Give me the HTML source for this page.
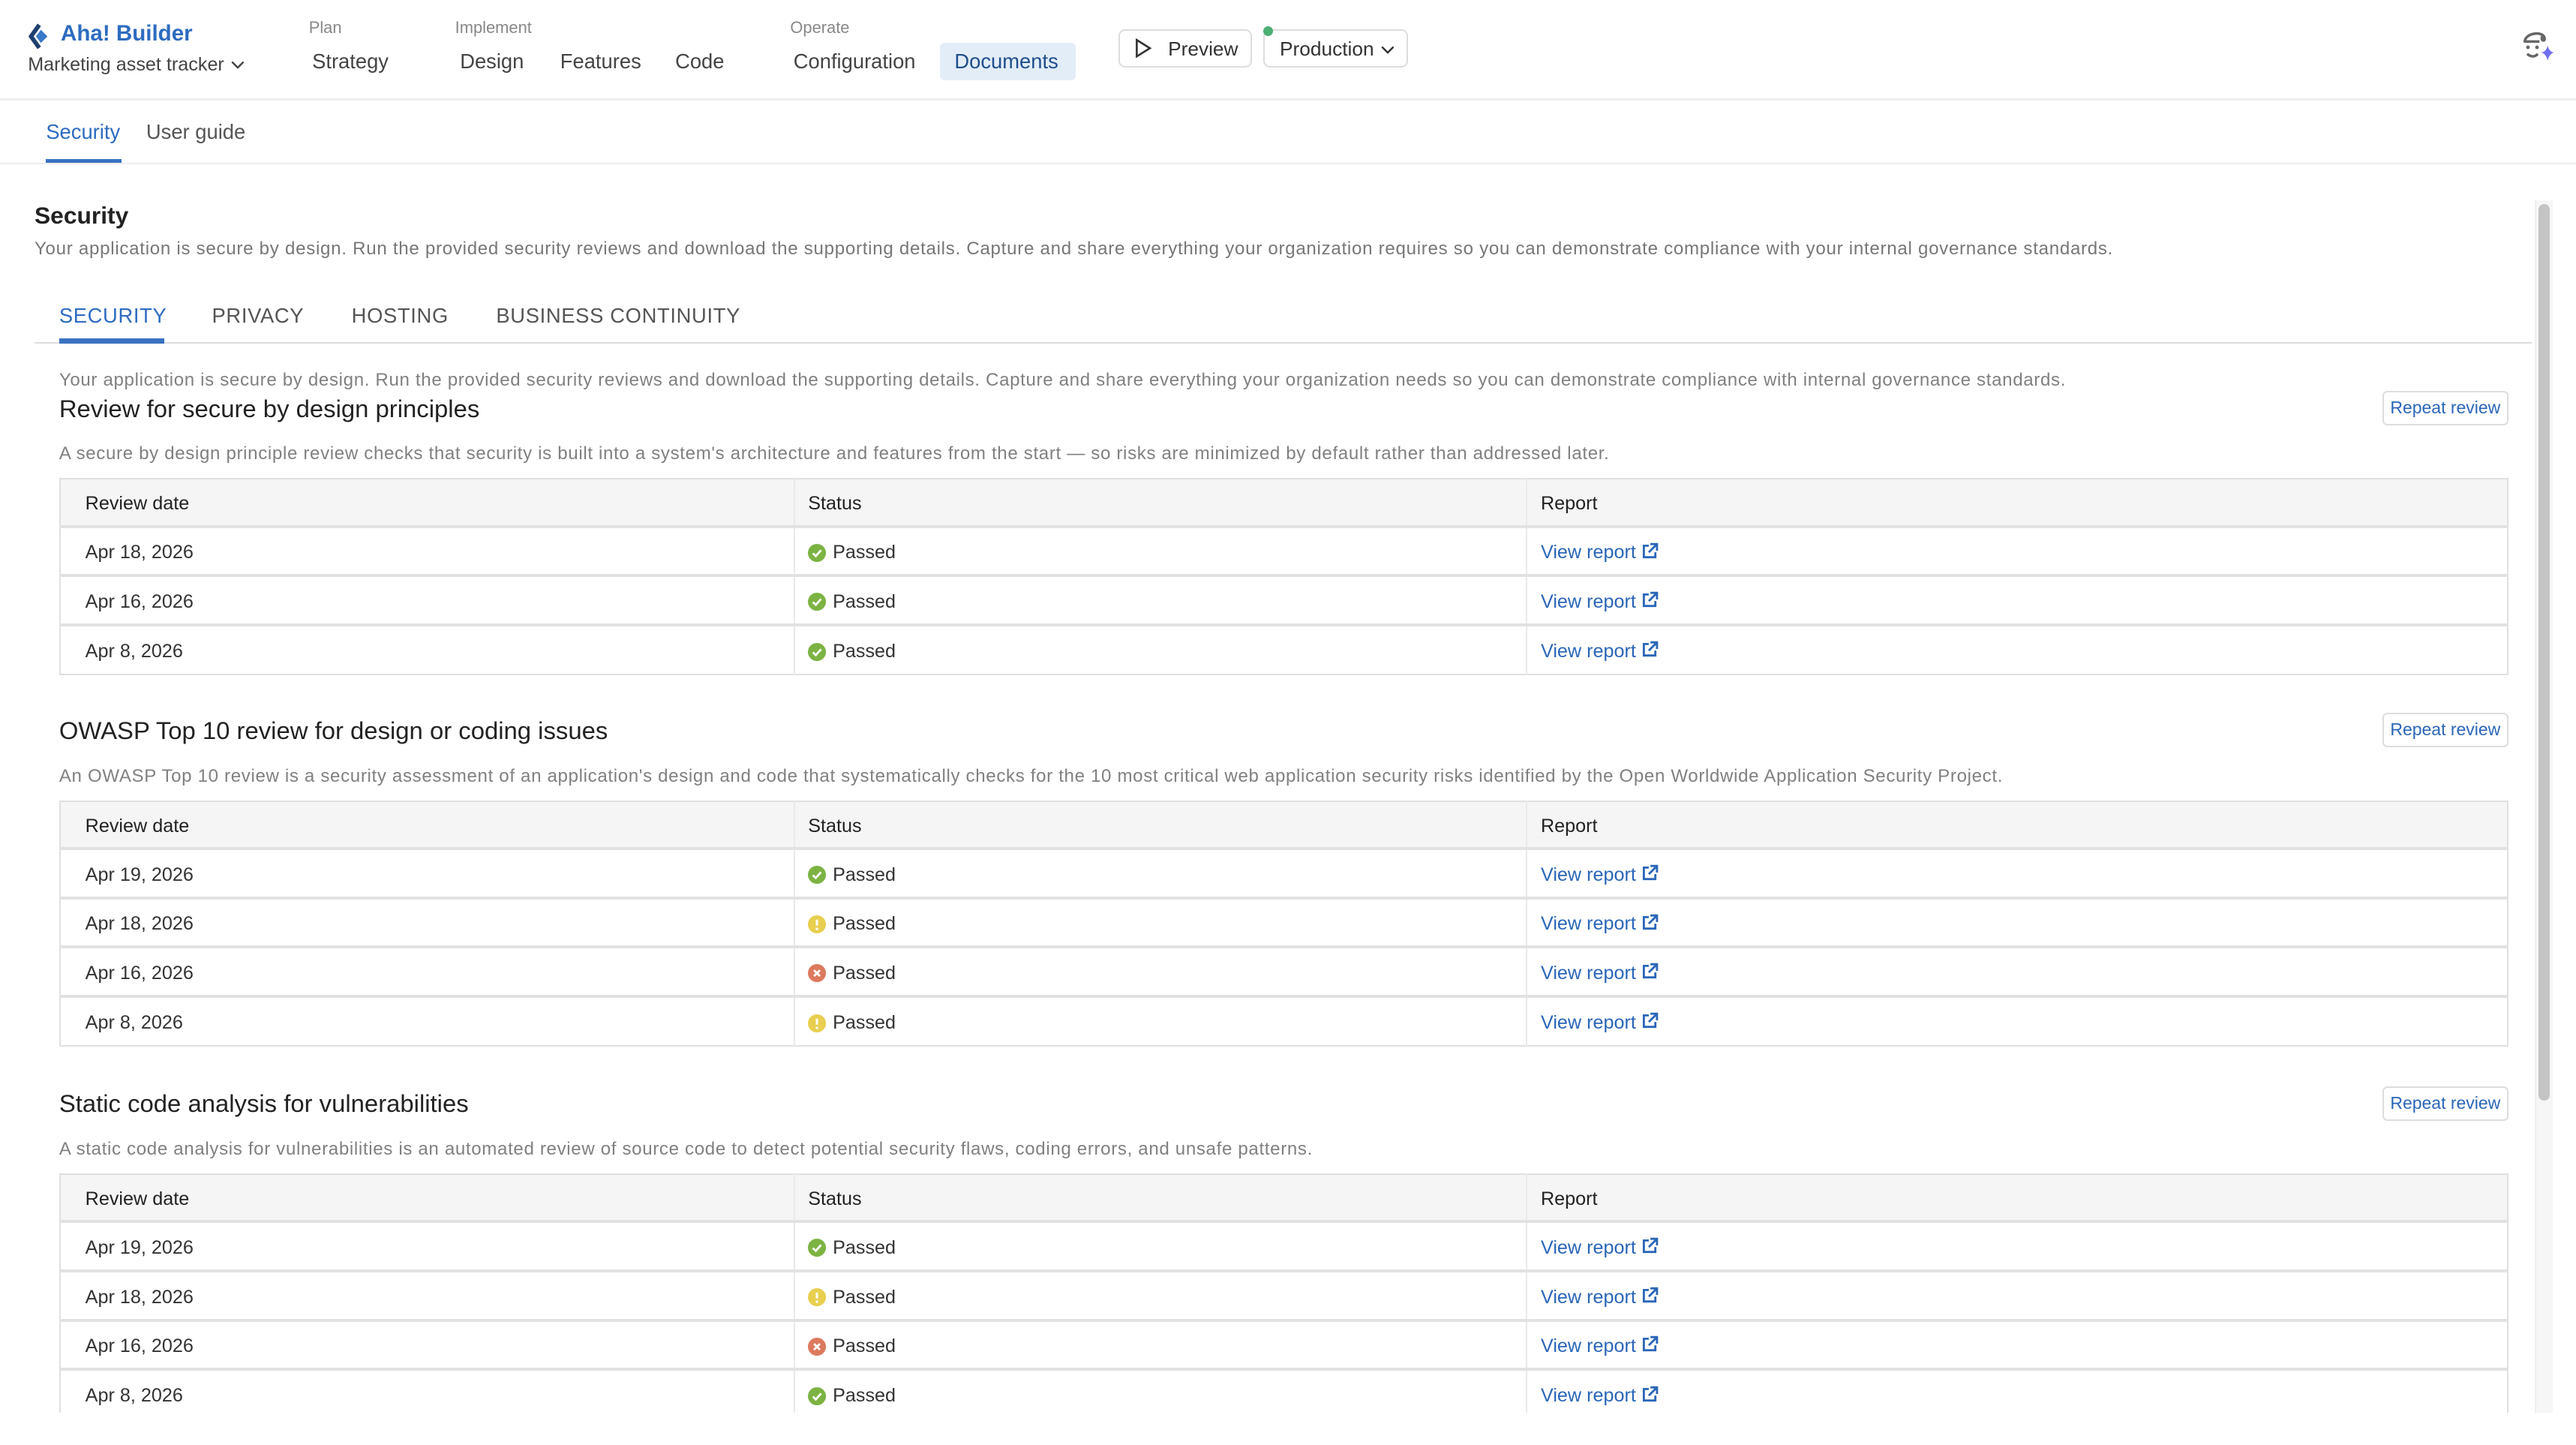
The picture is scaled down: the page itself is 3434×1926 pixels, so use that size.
<!DOCTYPE html>
<html><head><meta charset="utf-8"><style>
*{box-sizing:border-box;margin:0;padding:0}
html,body{width:3434px;height:1926px;overflow:hidden;background:#fff}
#r{zoom:2.19;width:1568px;height:880px;position:relative;font-family:"Liberation Sans",sans-serif;color:#333}
.a{position:absolute;white-space:nowrap}
.lbl{font-size:10px;color:#888;top:11px}
.nav{font-size:12.5px;color:#444;top:30px}
.btn{border:1px solid #ddd;border-radius:4px;background:#fff;font-size:12px;color:#333}
.h{font-size:15px;color:#222}
.d{font-size:11px;color:#808080;letter-spacing:.3px}
.rb{border:1px solid #ddd;border-radius:3px;font-size:10.5px;color:#2a66b8;width:77px;height:21px;text-align:center;line-height:19px}
table{position:absolute;left:36px;width:1491px;border-collapse:collapse;font-size:11.5px;color:#333;border:1px solid #e0e0e0}
td,th{height:30px;border-top:2px solid #e2e2e2;border-left:1px solid #eaeaea;padding:2px 0 0 8px;text-align:left;font-weight:normal;vertical-align:middle;line-height:14px}
th{background:#f5f5f5;color:#222;height:29px;border-top:none}
td:first-child,th:first-child{padding-left:15px;width:447px;border-left:none}
td:nth-child(2),th:nth-child(2){width:446px}
.ic{vertical-align:-2px;margin-right:4px}
.lk{color:#2a66b8}
.lk svg{vertical-align:-1px;margin-left:3px}
</style></head><body><div id="r">
<svg width="0" height="0" style="position:absolute"><defs>
<symbol id="g" viewBox="0 0 11 11"><circle cx="5.5" cy="5.5" r="5.5" fill="#7cb342"/><path d="M3 5.7 L4.8 7.4 L8 3.8" fill="none" stroke="#fff" stroke-width="1.3"/></symbol>
<symbol id="y" viewBox="0 0 11 11"><circle cx="5.5" cy="5.5" r="5.5" fill="#e8cf4f"/><path d="M5.5 2.6V6.3" stroke="#fff" stroke-width="1.4"/><circle cx="5.5" cy="8.2" r=".8" fill="#fff"/></symbol>
<symbol id="x" viewBox="0 0 11 11"><circle cx="5.5" cy="5.5" r="5.5" fill="#dd7a5e"/><path d="M3.7 3.7L7.3 7.3M7.3 3.7L3.7 7.3" stroke="#fff" stroke-width="1.3"/></symbol>
<symbol id="e" viewBox="0 0 11 11"><path d="M5 2H2v7h7V6M6 1h4v4M10 1L5 6" fill="none" stroke="#2a66b8" stroke-width="1.3"/></symbol>
</defs></svg>
<svg class="a" style="left:17px;top:14px" width="15" height="16" viewBox="0 0 15 16"><path d="M7 1 L2 8 L7 15" fill="none" stroke="#1f3f70" stroke-width="2.6"/><path d="M8 4 L12 8 L8 12 L5 8Z" fill="#3a78c9"/></svg>
<div class="a" style="left:37px;top:13px;font-size:13.5px;font-weight:bold;color:#2d6cc0">Aha! Builder</div>
<div class="a" style="left:17px;top:33px;font-size:11.5px;color:#444">Marketing asset tracker <svg width="10" height="8" viewBox="0 0 10 8"><path d="M1.5 2.5L5 6L8.5 2.5" fill="none" stroke="#444" stroke-width="1.1"/></svg></div>
<div class="a lbl" style="left:188px">Plan</div>
<div class="a lbl" style="left:277px">Implement</div>
<div class="a lbl" style="left:481px">Operate</div>
<div class="a nav" style="left:190px">Strategy</div>
<div class="a nav" style="left:280px">Design</div>
<div class="a nav" style="left:341px">Features</div>
<div class="a nav" style="left:411px">Code</div>
<div class="a nav" style="left:483px">Configuration</div>
<div class="a" style="left:572px;top:26px;width:83px;height:23px;background:#e3edf8;border-radius:3px"></div>
<div class="a nav" style="left:581px;color:#1f4e8c">Documents</div>
<div class="a btn" style="left:681px;top:18px;width:81px;height:23px"></div>
<svg class="a" style="left:690px;top:23px" width="12" height="13"><path d="M2 1.5 L10 6.5 L2 11.5Z" fill="none" stroke="#333" stroke-width="1.2"/></svg>
<div class="a" style="left:711px;top:23px;font-size:12px">Preview</div>
<div class="a btn" style="left:769px;top:18px;width:88px;height:23px"></div>
<div class="a" style="left:769px;top:16px;width:6px;height:6px;border-radius:50%;background:#4caf73"></div>
<div class="a" style="left:779px;top:23px;font-size:12px">Production <svg width="10" height="8" viewBox="0 0 10 8"><path d="M1.5 2.5L5 6L8.5 2.5" fill="none" stroke="#333" stroke-width="1.1"/></svg></div>
<svg class="a" style="left:1534px;top:18px" width="24" height="24" viewBox="0 0 24 24"><path d="M3 8 C3 2,14 1,15 5 C16 8,12 7,14 4" fill="none" stroke="#666" stroke-width="1.6"/><path d="M3 7.5 L12 7.5" stroke="#666" stroke-width="1.6"/><circle cx="5" cy="11" r="1.1" fill="#666"/><circle cx="10.5" cy="11" r="1.1" fill="#666"/><path d="M4.5 15 C7 17,9 17,11 15" fill="none" stroke="#666" stroke-width="1.6"/><path d="M17 10 Q18 14 21 14 Q18 15 17 19 Q16 15 13 14 Q16 14 17 10Z" fill="#6f6ff0"/></svg>
<div class="a" style="left:0;top:60px;width:1568px;height:1px;background:#eee"></div>
<div class="a" style="left:28px;top:73px;font-size:12.5px;color:#2d6cc0">Security</div>
<div class="a" style="left:89px;top:73px;font-size:12.5px;color:#555">User guide</div>
<div class="a" style="left:28px;top:97px;width:46px;height:2px;background:#3a72c2"></div>
<div class="a" style="left:0;top:99px;width:1568px;height:1px;background:#eee"></div>
<div class="a" style="left:1543px;top:122px;width:11px;height:738px;background:#f6f6f6;border-left:1px solid #eee"></div>
<div class="a" style="left:1545px;top:124px;width:7px;height:546px;background:#c4c4c4;border-radius:4px"></div>
<div class="a" style="left:21px;top:123px;font-size:14.5px;font-weight:bold;color:#222">Security</div>
<div class="a" style="left:21px;top:145px;font-size:11px;color:#777;letter-spacing:.33px">Your application is secure by design. Run the provided security reviews and download the supporting details. Capture and share everything your organization requires so you can demonstrate compliance with your internal governance standards.</div>
<div class="a" style="left:36px;top:185px;font-size:12.5px;color:#2d6cc0;letter-spacing:.3px">SECURITY</div>
<div class="a" style="left:129px;top:185px;font-size:12.5px;color:#555;letter-spacing:.3px">PRIVACY</div>
<div class="a" style="left:214px;top:185px;font-size:12.5px;color:#555;letter-spacing:.3px">HOSTING</div>
<div class="a" style="left:302px;top:185px;font-size:12.5px;color:#555;letter-spacing:.3px">BUSINESS CONTINUITY</div>
<div class="a" style="left:21px;top:208px;width:1520px;height:1px;background:#ddd"></div>
<div class="a" style="left:36px;top:206px;width:64px;height:3px;background:#3a72c2"></div>
<div class="a d" style="left:36px;top:225px">Your application is secure by design. Run the provided security reviews and download the supporting details. Capture and share everything your organization needs so you can demonstrate compliance with internal governance standards.</div>

<div style="position:absolute;left:0;top:0;width:1540px;height:860px;overflow:hidden">
<div class="a h" style="left:36px;top:240px">Review for secure by design principles</div>
<div class="a rb" style="left:1450px;top:238px">Repeat review</div>
<div class="a d" style="left:36px;top:270px">A secure by design principle review checks that security is built into a system's architecture and features from the start — so risks are minimized by default rather than addressed later.</div>
<table style="top:291px"><tr><th>Review date</th><th>Status</th><th>Report</th></tr>
<tr><td>Apr 18, 2026</td><td><svg class="ic" width="11" height="11"><use href="#g"/></svg>Passed</td><td class="lk">View report<svg width="11" height="11"><use href="#e"/></svg></td></tr>
<tr><td>Apr 16, 2026</td><td><svg class="ic" width="11" height="11"><use href="#g"/></svg>Passed</td><td class="lk">View report<svg width="11" height="11"><use href="#e"/></svg></td></tr>
<tr><td>Apr 8, 2026</td><td><svg class="ic" width="11" height="11"><use href="#g"/></svg>Passed</td><td class="lk">View report<svg width="11" height="11"><use href="#e"/></svg></td></tr>
</table>

<div class="a h" style="left:36px;top:436px">OWASP Top 10 review for design or coding issues</div>
<div class="a rb" style="left:1450px;top:434px">Repeat review</div>
<div class="a d" style="left:36px;top:466px">An OWASP Top 10 review is a security assessment of an application's design and code that systematically checks for the 10 most critical web application security risks identified by the Open Worldwide Application Security Project.</div>
<table style="top:487px"><tr><th>Review date</th><th>Status</th><th>Report</th></tr>
<tr><td>Apr 19, 2026</td><td><svg class="ic" width="11" height="11"><use href="#g"/></svg>Passed</td><td class="lk">View report<svg width="11" height="11"><use href="#e"/></svg></td></tr>
<tr><td>Apr 18, 2026</td><td><svg class="ic" width="11" height="11"><use href="#y"/></svg>Passed</td><td class="lk">View report<svg width="11" height="11"><use href="#e"/></svg></td></tr>
<tr><td>Apr 16, 2026</td><td><svg class="ic" width="11" height="11"><use href="#x"/></svg>Passed</td><td class="lk">View report<svg width="11" height="11"><use href="#e"/></svg></td></tr>
<tr><td>Apr 8, 2026</td><td><svg class="ic" width="11" height="11"><use href="#y"/></svg>Passed</td><td class="lk">View report<svg width="11" height="11"><use href="#e"/></svg></td></tr>
</table>

<div class="a h" style="left:36px;top:663px">Static code analysis for vulnerabilities</div>
<div class="a rb" style="left:1450px;top:661px">Repeat review</div>
<div class="a d" style="left:36px;top:693px">A static code analysis for vulnerabilities is an automated review of source code to detect potential security flaws, coding errors, and unsafe patterns.</div>
<table style="top:714px"><tr><th>Review date</th><th>Status</th><th>Report</th></tr>
<tr><td>Apr 19, 2026</td><td><svg class="ic" width="11" height="11"><use href="#g"/></svg>Passed</td><td class="lk">View report<svg width="11" height="11"><use href="#e"/></svg></td></tr>
<tr><td>Apr 18, 2026</td><td><svg class="ic" width="11" height="11"><use href="#y"/></svg>Passed</td><td class="lk">View report<svg width="11" height="11"><use href="#e"/></svg></td></tr>
<tr><td>Apr 16, 2026</td><td><svg class="ic" width="11" height="11"><use href="#x"/></svg>Passed</td><td class="lk">View report<svg width="11" height="11"><use href="#e"/></svg></td></tr>
<tr><td>Apr 8, 2026</td><td><svg class="ic" width="11" height="11"><use href="#g"/></svg>Passed</td><td class="lk">View report<svg width="11" height="11"><use href="#e"/></svg></td></tr>
</table>
</div>
</div></body></html>
